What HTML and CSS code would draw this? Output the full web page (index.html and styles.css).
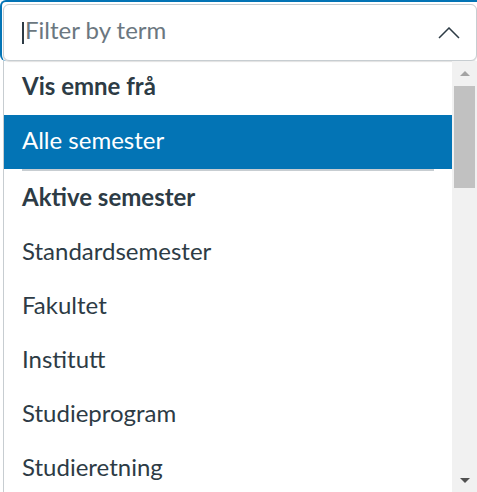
FILE: index.html
```html
<!DOCTYPE html>
<html>
<head>
<meta charset="utf-8">
<link rel="stylesheet" href="styles.css">
</head>
<body>
<div class="combo">
  <div class="field">
    <div class="input">
      <span class="caret"></span>
      <span class="placeholder">Filter by term</span>
      <svg class="chevron" width="22" height="12" viewBox="0 0 22 12"><path d="M1 11 L11 1 L21 11" fill="none" stroke="#2d3b45" stroke-width="1.5"/></svg>
    </div>
  </div>
  <div class="menu">
    <ul class="options">
      <li class="option group">Vis emne frå</li>
      <li class="option selected">Alle semester</li>
      <li class="separator"></li>
      <li class="option group">Aktive semester</li>
      <li class="option">Standardsemester</li>
      <li class="option">Fakultet</li>
      <li class="option">Institutt</li>
      <li class="option">Studieprogram</li>
      <li class="option">Studieretning</li>
    </ul>
    <div class="scrollbar">
      <div class="sb-button"><span class="arrow-up"></span></div>
      <div class="sb-thumb"></div>
      <div class="sb-track"></div>
      <div class="sb-button"><span class="arrow-down"></span></div>
    </div>
  </div>
</div>
</body>
</html>
```

FILE: styles.css
```css
html, body {
  margin: 0;
  padding: 0;
  background: #ffffff;
  overflow: hidden;
  height: 492px;
}
body {
  font-family: Lato, "Noto Sans", sans-serif;
  color: #2d3b45;
}
.combo {
  width: 480px;
}
.field {
  box-sizing: border-box;
  width: 480px;
  border-top: 2px solid #0374b5;
  border-left: 2px solid #0374b5;
  border-top-left-radius: 6px;
  border-bottom-left-radius: 6px;
  padding: 2px 0 0 1px;
}
.input {
  box-sizing: border-box;
  width: 474px;
  height: 57px;
  border: 1px solid #c7cdd1;
  border-radius: 6px;
  box-shadow: 0 1px 1px rgba(0, 0, 0, 0.12);
  display: flex;
  align-items: center;
  padding: 0 16px 0 18px;
  background: #fff;
}
.caret {
  display: inline-block;
  width: 2px;
  height: 22px;
  background: #2d3b45;
  margin-right: 1px;
}
.placeholder {
  font-size: 24px;
  color: #6b7780;
  margin-bottom: 6px;
}
.chevron {
  margin-left: auto;
  display: block;
}
.menu {
  box-sizing: border-box;
  margin-left: 3px;
  width: 474px;
  height: 431px;
  border-left: 1px solid #c7cdd1;
  display: flex;
  overflow: hidden;
}
.options {
  list-style: none;
  margin: 0;
  padding: 0;
  flex: 1;
  min-width: 0;
}
.option {
  box-sizing: border-box;
  height: 54px;
  display: flex;
  align-items: center;
  padding: 0 0 6px 18px;
  font-size: 24px;
  color: #2d3b45;
}
.option.group {
  font-weight: 700;
}
.option.selected {
  background: #0374b5;
  color: #ffffff;
}
.separator {
  height: 2px;
  margin: 0 18px 1px;
  background: #c7cdd1;
}
.scrollbar {
  width: 25px;
  flex: none;
  background: #f1f1f1;
  display: flex;
  flex-direction: column;
}
.sb-button {
  height: 24px;
  display: flex;
  align-items: center;
  justify-content: center;
  flex: none;
}
.arrow-up {
  width: 0;
  height: 0;
  border-left: 5px solid transparent;
  border-right: 5px solid transparent;
  border-bottom: 5px solid #a3a3a3;
}
.arrow-down {
  width: 0;
  height: 0;
  border-left: 5.5px solid transparent;
  border-right: 5.5px solid transparent;
  border-top: 5px solid #505050;
}
.sb-thumb {
  margin: 1px 2px 0;
  height: 102px;
  background: #c1c1c1;
  flex: none;
}
.sb-track {
  flex: 1;
}
```
